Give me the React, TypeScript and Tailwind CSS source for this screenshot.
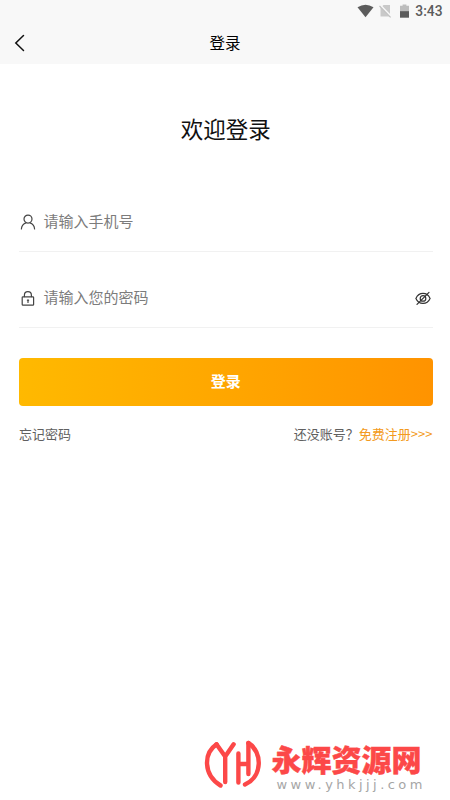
import React from "react";

function StatusBar() {
  return (
    <div className="flex h-[22px] items-center justify-end pr-[7.5px] text-[#5c5c5c]">
      <svg className="h-[14px] w-[17px]" viewBox="0 0 17 14">
        <path d="M0.5 3.3Q8.5-2 16.5 3.3L8.5 13.2Z" fill="#5c5c5c" />
      </svg>
      <svg className="ml-[5px] h-[14px] w-[13px]" viewBox="0 0 13 14">
        <path d="M4.5 1H11V12.5H1.5V4Z" fill="#c9c9c9" />
        <path d="M0.8 1.2L12.2 13" stroke="#f8f8f8" strokeWidth="2.4" />
        <path d="M0.5 2L11.6 13.4" stroke="#bdbdbd" strokeWidth="1.1" />
      </svg>
      <svg className="ml-2 h-[14px] w-[9px]" viewBox="0 0 9 14">
        <path d="M0 1.8H2.6V0.5H6.4V1.8H9V8H0Z" fill="#bdbdbd" />
        <path d="M0 7.2H9V13.7H0Z" fill="#5c5c5c" />
      </svg>
      <span className="ml-[6.5px] pt-px font-['Roboto',sans-serif] text-[13.8px] leading-none font-medium">
        3:43
      </span>
    </div>
  );
}

function UserIcon() {
  return (
    <svg className="h-4 w-4" viewBox="0 0 16 16" fill="none" stroke="#444" strokeWidth="1.2" strokeLinecap="round">
      <circle cx="8" cy="5.1" r="4" />
      <path d="M1.4 15C1.7 11.7 3.6 9.7 6 8.9M10 8.9C12.4 9.7 14.3 11.7 14.6 15" />
    </svg>
  );
}

function LockIcon() {
  return (
    <svg className="h-4 w-4" viewBox="0 0 16 16" fill="none" stroke="#444" strokeWidth="1.2" strokeLinecap="round">
      <rect x="2.2" y="6.8" width="11.4" height="8.4" rx="0.8" />
      <path d="M4.4 6.6V5.2A3.5 3.5 0 0 1 11.4 5.2V6.6M8 10.4V12.4M7.4 10.2H8.6" />
    </svg>
  );
}

function HiddenEyeIcon() {
  return (
    <svg className="h-4 w-4" viewBox="0 0 16 16" fill="none" stroke="#333" strokeWidth="1.2" strokeLinecap="round">
      <path d="M0.9 8.4C2.5 4.9 5 3.4 8 3.4S13.5 4.9 15.1 8.4C13.5 11.9 11 13.4 8 13.4S2.5 11.9 0.9 8.4Z" />
      <circle cx="8" cy="8.4" r="2.8" />
      <path d="M2 14.4L14 2.4" />
    </svg>
  );
}

function Field({ icon, hint, trailing }: { icon: React.ReactNode; hint: string; trailing?: React.ReactNode }) {
  return (
    <div className="flex h-[59px] items-center border-b border-[#f1f1f1] pr-[2px] pb-px pl-px">
      {icon}
      <span className="ml-[7.5px] flex-1 pb-[2px] text-[15px] leading-5 text-[#7c7c7c]">{hint}</span>
      {trailing}
    </div>
  );
}

function Watermark() {
  return (
    <div className="flex pl-[203.5px]">
      <svg className="h-[54px] w-[58px] shrink-0" viewBox="0 0 58 54" fill="none" stroke="#fc4848" strokeWidth="4.4" strokeLinecap="round" strokeLinejoin="round">
        <path d="M12.5 6.3C-0.5 15 -1 37 16.5 47.5" />
        <path d="M12.5 6.3L21.2 18.5L29.6 6.3M21.2 18.5V44" />
        <path d="M34.4 15.5V44.5M34.4 26H44.4M44.4 5V36" />
        <path d="M44.4 5C58.5 13.5 59 38.5 41 46.5" />
      </svg>
      <div className="ml-[10px] w-[165px]">
        <div className="mt-[5px] text-[30px] leading-[30px] font-black whitespace-nowrap text-[#fc4848] [-webkit-text-stroke:0.4px_#fc4848]">
          永辉资源网
        </div>
        <div className="mt-[4px] pl-[5px] font-['DejaVu_Sans',sans-serif] text-[13px] leading-[15px] tracking-[3.45px] whitespace-nowrap text-[#a6a6a6]">
          www.yhkjjj.com
        </div>
      </div>
    </div>
  );
}

export default function App() {
  return (
    <div className="flex h-[800px] w-[450px] flex-col overflow-hidden bg-white font-['Noto_Sans_CJK_SC',sans-serif]">
      <header className="h-16 bg-[#f8f8f8]">
        <StatusBar />
        <div className="grid h-[42px] grid-cols-[1fr_auto_1fr] items-center px-[14px]">
          <svg className="h-[18px] w-3" viewBox="0 0 12 18" fill="none" stroke="#111" strokeWidth="1.5" strokeLinecap="round">
            <path d="M9.5 1.5L1.8 9L9.5 16.5" />
          </svg>
          <h1 className="pb-[2px] text-[15.5px] leading-5 font-normal text-black">登录</h1>
        </div>
      </header>
      <main className="flex flex-1 flex-col pr-[17.5px] pl-[19px]">
        <h2 className="mt-[48px] text-center text-[22.5px] leading-8 text-[#111]">欢迎登录</h2>
        <div className="mt-[49px]">
          <Field icon={<UserIcon />} hint="请输入手机号" />
        </div>
        <div className="mt-[17px]">
          <Field icon={<LockIcon />} hint="请输入您的密码" trailing={<HiddenEyeIcon />} />
        </div>
        <button className="mt-[30px] h-12 rounded-[4px] bg-linear-to-r from-[#ffb900] to-[#ff9300] pb-[2px] text-[15px] font-bold text-white">
          登录
        </button>
        <div className="mt-[18px] flex justify-between text-[13px] leading-5 text-[#606060]">
          <span>忘记密码</span>
          <span>
            还没账号？<span className="text-[#f39a20]">免费注册&gt;&gt;&gt;</span>
          </span>
        </div>
      </main>
      <footer className="h-[62px]">
        <Watermark />
      </footer>
    </div>
  );
}
